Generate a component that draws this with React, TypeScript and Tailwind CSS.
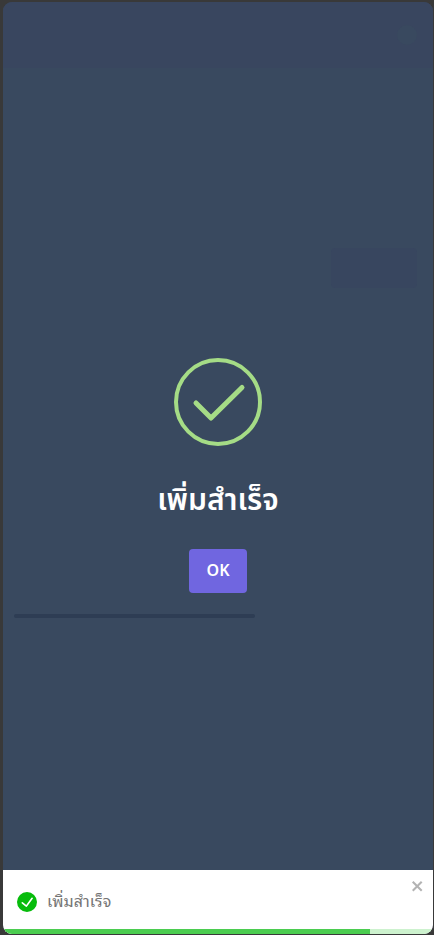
const thai = "font-['Noto_Sans_Thai','Noto_Sans','Open_Sans',sans-serif]";
const looped = "font-['Noto_Sans_Thai_Looped','Noto_Looped_Thai','Loma','Liberation_Sans',sans-serif]";

function PageBehind() {
  return (
    <div className="absolute inset-0 bg-[#39495f]">
      <div className="flex h-[66px] items-center justify-end bg-[#39465f] pr-4">
        <div className="size-5 rounded-full bg-[#39495f]" />
      </div>
      <div className="mt-[180px] mr-4 ml-auto h-[40px] w-[86px] rounded bg-[#38465f]" />
    </div>
  );
}

function SuccessDialog() {
  return (
    <div className="relative flex flex-1 flex-col items-center pt-[356px]">
      <svg width="88" height="88" viewBox="0 0 88 88" fill="none" stroke="#a5dc86">
        <circle cx="44" cy="44" r="42" strokeWidth="4" />
        <path d="M22 45 L37 60 L68 29.5" strokeWidth="5" strokeLinecap="round" strokeLinejoin="round" />
      </svg>
      <h2 className={`${thai} mt-[33px] flex h-[44px] items-center text-[30px] leading-none font-semibold whitespace-nowrap text-white`}>
        เพิ่มสำเร็จ
      </h2>
      <button className={`${thai} mt-[26px] h-[44px] w-[58px] rounded-[4px] bg-[#7066e0] text-[16px] font-semibold text-white`}>
        OK
      </button>
      <div className="mt-[21px] ml-[11px] h-1 w-[241px] self-start rounded-full bg-[#2e3d54]" />
    </div>
  );
}

function Toast() {
  return (
    <div className="relative flex h-[64px] flex-col bg-white">
      <div className="flex flex-1 items-center pt-[5px] pl-[14px]">
        <svg width="20" height="20" viewBox="0 0 24 24" fill="#07bc0c">
          <path d="M12 0a12 12 0 1012 12A12.014 12.014 0 0012 0zm6.927 8.2l-6.845 9.289a1.011 1.011 0 01-1.43.188l-4.888-3.908a1 1 0 111.25-1.562l4.076 3.261 6.227-8.451a1 1 0 111.61 1.183z" />
        </svg>
        <span className={`${looped} mb-[4px] ml-[10px] text-[16px] leading-6 tracking-[0.1px] whitespace-nowrap text-[#757575]`}>เพิ่มสำเร็จ</span>
        <svg className="mr-[8px] mb-[33px] ml-auto h-4 w-3.5" viewBox="0 0 14 16" fill="#b3b3b3">
          <path fillRule="evenodd" d="M7.71 8.23l3.75 3.75-1.48 1.48-3.75-3.75-3.75 3.75L1 11.98l3.75-3.75L1 4.48 2.48 3l3.75 3.75L9.98 3l1.48 1.48-3.75 3.75z" />
        </svg>
      </div>
      <div className="h-[5px] bg-[#cdf2ce]">
        <div className="h-full w-[367px] bg-[#4bcd50]" />
      </div>
    </div>
  );
}

export default function App() {
  return (
    <div className="h-[935px] w-[434px] bg-[#393939] pt-[2px] pr-px pb-px pl-[3px]">
      <main className="relative flex h-[932px] flex-col overflow-hidden rounded-[9px]">
        <PageBehind />
        <SuccessDialog />
        <Toast />
      </main>
    </div>
  );
}
